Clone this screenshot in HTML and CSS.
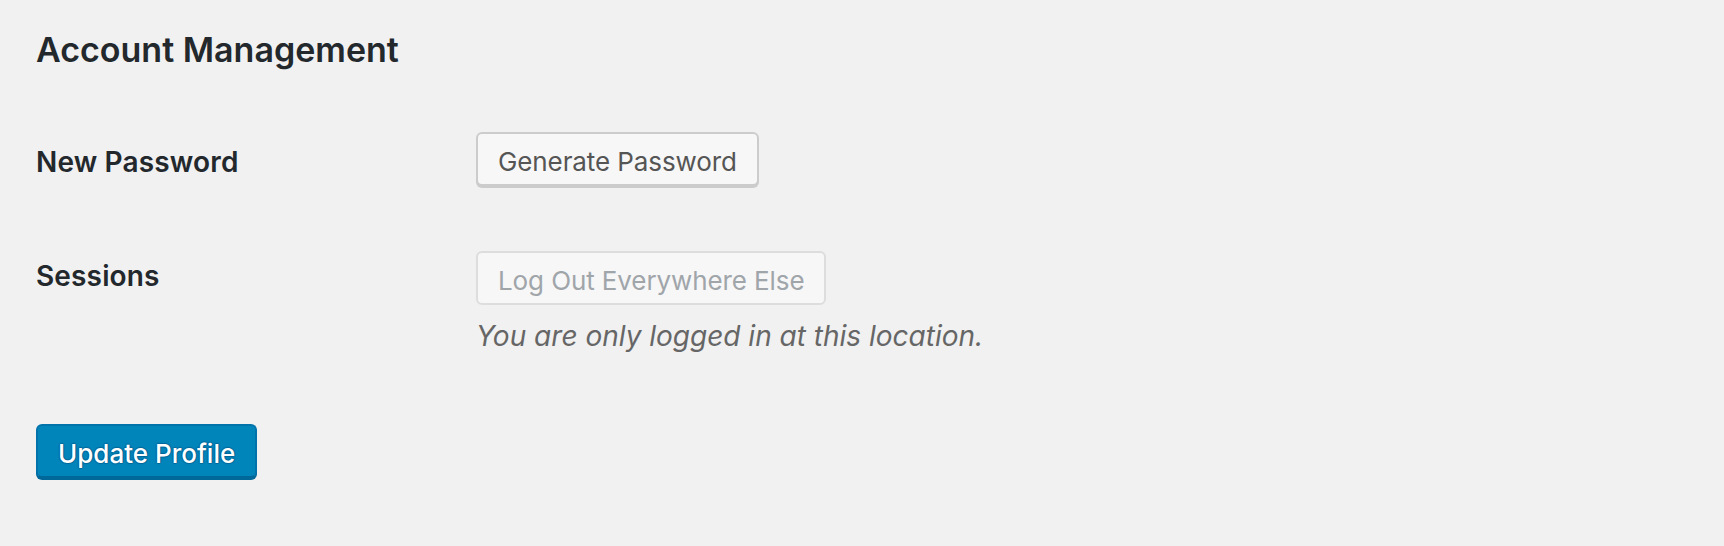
FILE: index.html
```html
<!DOCTYPE html>
<html lang="en">
<head>
<meta charset="utf-8">
<title>Account Management</title>
<link rel="stylesheet" href="styles.css">
</head>
<body>
<main class="page">
  <h2 class="title">Account Management</h2>
  <div class="form-table">
    <div class="row">
      <div class="label">New Password</div>
      <div class="field">
        <button class="btn" type="button">Generate Password</button>
      </div>
    </div>
    <div class="row">
      <div class="label">Sessions</div>
      <div class="field field-sessions">
        <button class="btn" type="button" disabled>Log Out Everywhere Else</button>
        <p class="desc">You are only logged in at this location.</p>
      </div>
    </div>
  </div>
  <div class="submit">
    <button class="btn-primary" type="submit">Update Profile</button>
  </div>
</main>
</body>
</html>
```

FILE: styles.css
```css
html, body {
  margin: 0;
  padding: 0;
  background: #f1f1f1;
}

body {
  font-family: Inter, "Liberation Sans", sans-serif;
  color: #23282d;
  width: 1724px;
  height: 546px;
  overflow: hidden;
}

.page {
  padding: 30px 0 0 36px;
}

.title {
  margin: 0;
  font-size: 34px;
  line-height: 40px;
  font-weight: 600;
  color: #23282d;
}

.form-table {
  margin-top: 32px;
  display: flex;
  flex-direction: column;
}

.row {
  display: grid;
  grid-template-columns: 440px 1fr;
}

.label {
  padding-top: 42px;
  font-size: 28px;
  line-height: 36px;
  font-weight: 600;
  letter-spacing: 0.15px;
  color: #23282d;
}

.field {
  padding: 30px 0 30px;
  display: flex;
  flex-direction: column;
  align-items: flex-start;
}

.field-sessions {
  padding-top: 35px;
  padding-bottom: 0;
}

.btn {
  font-family: inherit;
  font-size: 26px;
  line-height: 45px;
  height: 54px;
  padding: 5px 20px 0;
  margin: 0;
  border: 2px solid #cccccc;
  border-radius: 6px;
  background: #f7f7f7;
  color: #555555;
  box-shadow: 0 2px 0 #cccccc;
  cursor: pointer;
  white-space: nowrap;
  letter-spacing: -0.1px;
}

.btn:disabled {
  color: #a0a5aa;
  border-color: #dddddd;
  background: #f7f7f7;
  box-shadow: none;
  cursor: default;
}

.desc {
  margin: 13px 0 0;
  font-size: 28px;
  line-height: 36px;
  font-style: italic;
  color: #666666;
}

.submit {
  padding-top: 70px;
}

.btn-primary {
  font-family: inherit;
  font-size: 26px;
  font-weight: 500;
  line-height: 45px;
  height: 54px;
  padding: 5px 20px 0;
  margin: 0;
  border: 2px solid #0073aa;
  border-bottom-color: #006799;
  border-radius: 6px;
  background: #0085ba;
  color: #ffffff;
  box-shadow: 0 2px 0 #006799;
  text-shadow: 0 -1px 1px #006799, 1px 0 1px #006799, 0 1px 1px #006799, -1px 0 1px #006799;
  cursor: pointer;
  white-space: nowrap;
}
```
